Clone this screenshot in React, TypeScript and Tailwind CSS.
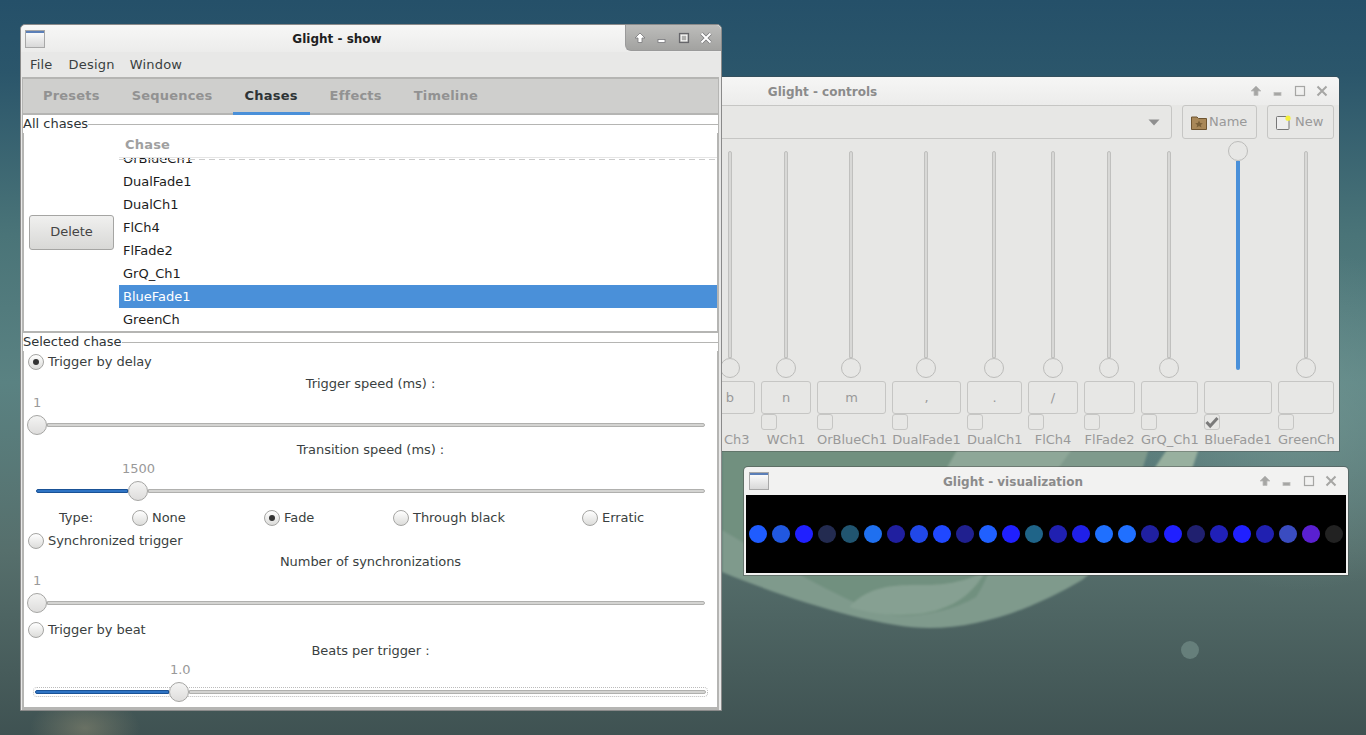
import React from "react";

const CHASES = ["OrBlueCh1", "DualFade1", "DualCh1", "FlCh4", "FlFade2", "GrQ_Ch1", "BlueFade1", "GreenCh"];

const FADERS = [
  { w: "w-[50px]", key: "b", label: "Ch3", labelClass: "pl-[19px] text-left" },
  { w: "w-[50px]", key: "n", label: "WCh1" },
  { w: "w-[69px]", key: "m", label: "OrBlueCh1", odd: true },
  { w: "w-[69px]", key: ",", label: "DualFade1", odd: true },
  { w: "w-[55px]", key: ".", label: "DualCh1", odd: true },
  { w: "w-[50px]", key: "/", label: "FlCh4" },
  { w: "w-[51px]", key: "", label: "FlFade2", odd: true },
  { w: "w-[57px]", key: "", label: "GrQ_Ch1", odd: true },
  { w: "w-[68px]", key: "", label: "BlueFade1", on: true },
  { w: "w-[56px]", key: "", label: "GreenCh" },
];

const LEDS = [
  "#1f5cff", "#2158e0", "#2020ff", "#232b50", "#215570", "#1f70f0", "#201f9f", "#2148e8", "#2048ff",
  "#20208f", "#2060ff", "#2020ff", "#1f6488", "#2020b0", "#2020e8", "#1f70ff", "#2070ff", "#2020a0",
  "#2020ff", "#20206f", "#2020b8", "#2020ff", "#2020b0", "#3a4cc0", "#5a20d0", "#222222",
];

const Wallpaper = () => (
  <svg className="absolute inset-0" width="1366" height="735" viewBox="0 0 1366 735">
    <defs>
      <linearGradient id="sky" x1="0" y1="0" x2="0" y2="1">
        <stop offset="0" stopColor="#255069" />
        <stop offset="0.1" stopColor="#2b566b" />
        <stop offset="0.32" stopColor="#4a7478" />
        <stop offset="0.52" stopColor="#5a8282" />
        <stop offset="0.75" stopColor="#566f6c" />
        <stop offset="1" stopColor="#3f5252" />
      </linearGradient>
      <radialGradient id="glow" cx="0.5" cy="0.5" r="0.5">
        <stop offset="0" stopColor="#85856f" stopOpacity="0.6" />
        <stop offset="1" stopColor="#85856f" stopOpacity="0" />
      </radialGradient>
      <radialGradient id="side" cx="0.5" cy="0.5" r="0.5">
        <stop offset="0" stopColor="#7da09b" stopOpacity="0.55" />
        <stop offset="1" stopColor="#7da09b" stopOpacity="0" />
      </radialGradient>
      <filter id="soft">
        <feGaussianBlur stdDeviation="0.8" />
      </filter>
    </defs>
    <rect width="1366" height="735" fill="url(#sky)" />
    <ellipse cx="1300" cy="420" rx="190" ry="170" fill="url(#side)" />
    <ellipse cx="85" cy="728" rx="55" ry="32" fill="url(#glow)" />
    <g filter="url(#soft)">
      <path d="M722 445 H1150 C1130 510 1110 560 1082 580 C1040 605 985 628 929 628 C880 628 790 600 722 572 Z" fill="#7f9a8c" />
      <path d="M722 445 H1000 C1010 500 1000 560 976 597 C950 612 915 618 891 615 C860 610 790 570 722 530 Z" fill="#71907f" />
      <path d="M849 607 C870 585 895 585 921 585 C945 585 960 583 985 572 C975 590 960 603 938 610 C915 617 880 617 849 607 Z" fill="#86a092" />
      <path d="M960 445 H1075 L1050 480 H940 Z" fill="#8ea798" />
      <path d="M1170 445 H1200 L1190 475 H1150 Z" fill="#98b09f" />
    </g>
    <circle cx="1190" cy="650" r="9" fill="#667f7b" />
  </svg>
);

const ArrowUp = ({ fill, stroke }: { fill: string; stroke: string }) => (
  <svg width="12" height="12" viewBox="0 0 12 12">
    <path d="M6 1 L11 6 H8 V10.5 H4 V6 H1 Z" fill={fill} stroke={stroke} strokeWidth="0.8" />
  </svg>
);

const TitleButtons = ({ active }: { active?: boolean }) => {
  const fill = active ? "#ffffff" : "#a6a6a4";
  const stroke = active ? "#77777a" : "#bdbdbb";
  return (
    <div className="flex items-center">
      <div className="flex w-[22px] justify-center">
        <ArrowUp fill={fill} stroke={stroke} />
      </div>
      <div className="flex w-[22px] justify-center">
        <svg width="12" height="12" viewBox="0 0 12 12">
          <rect x="2" y="7.5" width="7" height="3" fill={fill} stroke={stroke} strokeWidth="0.8" />
        </svg>
      </div>
      <div className="flex w-[22px] justify-center">
        <svg width="12" height="12" viewBox="0 0 12 12">
          <rect x="1.5" y="1.5" width="9" height="9" fill="none" stroke={active ? "#66666a" : "#a6a6a4"} strokeWidth="1.2" />
          {active && <rect x="3.2" y="3.2" width="5.6" height="5.6" fill="none" stroke="#ffffff" strokeWidth="1" />}
        </svg>
      </div>
      <div className="flex w-[22px] justify-center">
        <svg width="12" height="12" viewBox="0 0 12 12">
          {active && <path d="M1.5 1.5 L10.5 10.5 M10.5 1.5 L1.5 10.5" stroke="#77777a" strokeWidth="3.4" />}
          <path d="M1.5 1.5 L10.5 10.5 M10.5 1.5 L1.5 10.5" stroke={fill} strokeWidth="2" />
        </svg>
      </div>
    </div>
  );
};

const WindowIcon = ({ ml }: { ml: string }) => (
  <div className={`${ml} flex h-[18px] w-[20px] shrink-0 flex-col border border-[#a8a8a8] bg-gradient-to-b from-white to-[#d8d8d8]`}>
    <div className="h-[2px] bg-[#5b7fb8]" />
  </div>
);

const Radio = ({ checked }: { checked?: boolean }) => (
  <span className="flex h-[16px] w-[16px] shrink-0 items-center justify-center rounded-full border border-[#a5a5a3] bg-gradient-to-b from-white to-[#dcdcda]">
    {checked && <span className="h-[6px] w-[6px] rounded-full bg-[#333]" />}
  </span>
);

const Thumb = () => (
  <span className="h-[20px] w-[20px] shrink-0 rounded-full border border-[#a5a5a3] bg-gradient-to-b from-[#f4f4f3] to-[#dedddc]" />
);

// horizontal scale: blue part up to the thumb, grey part after it
const Slider = ({ fill }: { fill: string }) => (
  <div className="flex h-[20px] items-center">
    {fill && <div className={`${fill} h-[4px] rounded-l-full border border-[#1a5296] bg-[#2f74c4]`} />}
    <Thumb />
    <div className="h-[4px] flex-1 rounded-r-full border border-[#b0b0ae] bg-[#d4d4d2]" />
  </div>
);

const Row = ({ h, className, children }: { h: string; className?: string; children: React.ReactNode }) => (
  <div className={`flex items-center ${h} ${className ?? ""}`}>{children}</div>
);

type FaderProps = { w: string; keyName: string; label: string; on?: boolean; odd?: boolean; labelClass?: string };

const Fader = ({ w, keyName, label, on, odd, labelClass }: FaderProps) => (
  <div className={`flex ${w} shrink-0 flex-col`}>
    <div className={`flex h-[239px] flex-col items-center ${on ? "pb-[8px] pt-[2px]" : "pt-[12px]"} ${odd ? "pr-[1px]" : ""}`}>
      {on ? (
        <>
          <span className="h-[20px] w-[20px] shrink-0 rounded-full border border-[#bcbcba]" />
          <div className="w-[4px] flex-1 rounded-b-full bg-[#4a90d9]" />
        </>
      ) : (
        <>
          <div className="w-[4px] flex-1 rounded-t-full border border-[#c0c0be] bg-[#d8d8d6]" />
          <span className="h-[20px] w-[20px] shrink-0 rounded-full border border-[#bcbcba]" />
        </>
      )}
    </div>
    <div className="mt-[3px] flex h-[33px] items-center justify-center rounded-[3px] border border-[#c6c6c4] text-[13px] text-[#999]">
      {keyName}
    </div>
    <div className="flex h-[17px] items-start">
      <span className="flex h-[16px] w-[16px] items-center justify-center rounded-[3px] border border-[#c6c6c4]">
        {on && (
          <svg width="14" height="13" viewBox="0 0 14 13">
            <path d="M1.5 6 L5.2 10 L12.5 2" fill="none" stroke="#7a7a7a" strokeWidth="3" />
          </svg>
        )}
      </span>
    </div>
    <div className={`mt-[1px] whitespace-nowrap text-center text-[13px] leading-[16px] text-[#999] ${labelClass ?? ""}`}>{label}</div>
  </div>
);

const App = () => {
  return (
    <div className="relative h-[735px] w-[1366px] overflow-hidden font-['DejaVu_Sans',sans-serif] text-[13px] text-[#2e3436]">
      <Wallpaper />

      {/* controls window, partly behind the main one */}
      <div className="absolute left-[375px] top-[77px] flex h-[374px] w-[964px] flex-col rounded-t-[4px] bg-[#e7e7e5] shadow-[0_0_0_1px_rgba(70,70,70,0.35)]">
        <div className="flex h-[28px] shrink-0 items-center rounded-t-[4px] bg-gradient-to-b from-[#f6f6f5] to-[#ececeb]">
          <div className="w-[25px]" />
          <div className="flex-1 pt-[1px] text-center text-[12px] font-bold text-[#8b8b8b]">Glight - controls</div>
          <div className="pr-[6px]">
            <TitleButtons />
          </div>
        </div>
        <div className="flex h-[34px] shrink-0 items-stretch gap-[10px] pr-[5px]">
          <div className="flex flex-1 items-center justify-end rounded-[3px] border border-[#c6c6c4] pr-[11px]">
            <svg width="12" height="7" viewBox="0 0 12 7">
              <path d="M0.5 0.5 H11.5 L6 6.5 Z" fill="#8f8f8f" />
            </svg>
          </div>
          <div className="flex w-[75px] items-center gap-[2px] rounded-[3px] border border-[#c6c6c4] pl-[8px] text-[#999]">
            <svg width="16" height="15" viewBox="0 0 16 15">
              <path d="M0.5 2 H6 L7.5 3.5 H15.5 V14.5 H0.5 Z" fill="#a98858" stroke="#6f5530" />
              <path d="M8 5.5 L9.2 8 L11.8 8.2 L9.8 9.9 L10.5 12.4 L8 11 L5.5 12.4 L6.2 9.9 L4.2 8.2 L6.8 8 Z" fill="#7a6038" />
            </svg>
            <span>Name</span>
          </div>
          <div className="flex w-[67px] items-center gap-[4px] rounded-[3px] border border-[#c6c6c4] pl-[8px] text-[#999]">
            <svg width="15" height="15" viewBox="0 0 15 15">
              <rect x="0.5" y="1.5" width="12.5" height="13" rx="1" fill="#eeeeee" stroke="#777777" />
              <circle cx="12" cy="3.2" r="2.6" fill="#f5f03c" />
            </svg>
            <span>New</span>
          </div>
        </div>
        <div className="flex justify-end gap-[6px] pr-[5px]">
          {FADERS.map((f) => (
            <Fader key={f.label} w={f.w} keyName={f.key} label={f.label} on={f.on} odd={f.odd} labelClass={f.labelClass} />
          ))}
        </div>
      </div>

      {/* visualization window */}
      <div className="absolute left-[744px] top-[467px] flex h-[108px] w-[604px] flex-col rounded-t-[4px] bg-[#f2f2f1] shadow-[0_0_0_1px_rgba(70,70,70,0.45)]">
        <div className="flex h-[28px] shrink-0 items-center">
          <WindowIcon ml="ml-[5px]" />
          <div className="w-[3px]" />
          <div className="flex-1 pt-[1px] text-center text-[12px] font-bold text-[#8b8b8b]">Glight - visualization</div>
          <div className="pr-[6px]">
            <TitleButtons />
          </div>
        </div>
        <div className="mx-[2px] mb-[2px] flex flex-1 items-center justify-between bg-black px-[2.5px]">
          {LEDS.map((c, i) => (
            <span key={i} className="h-[18px] w-[18px] rounded-full" style={{ backgroundColor: c }} />
          ))}
        </div>
      </div>

      {/* main window */}
      <div className="absolute left-[20px] top-[24px] flex h-[687px] w-[702px] flex-col rounded-t-[5px] border border-[#8a8a8a] bg-[#e8e8e7]">
        <div className="relative flex h-[27px] shrink-0 items-center rounded-t-[5px] bg-gradient-to-b from-[#f7f7f6] to-[#ececeb]">
          <WindowIcon ml="ml-[4px]" />
          <div className="w-[4px]" />
          <div className="flex-1 pt-[1px] text-center text-[12px] font-bold text-[#1f1f1f]">Glight - show</div>
          <div className="flex h-[26px] self-start rounded-bl-[6px] rounded-tr-[5px] border-b border-l border-[#9a9a9a] bg-gradient-to-b from-[#bdbdbb] to-[#a2a2a0] pl-[3px] pr-[4px]">
            <TitleButtons active />
          </div>
        </div>
        <div className="flex h-[25px] shrink-0 items-center gap-[16px] px-[9px] tracking-[0.2px] text-[#3a3f41]">
          <span>File</span>
          <span>Design</span>
          <span className="-ml-px">Window</span>
        </div>
        <div className="ml-[1px] mr-[2px] flex flex-1 flex-col border-x border-b border-t-2 border-[#b5b5b3] bg-white">
          <div className="flex h-[36px] shrink-0 items-stretch gap-[8px] border-b-2 border-[#b5b5b3] bg-[#cfcfcd] px-[8px] text-[13px] font-bold tracking-[0.2px] text-[#929292]">
            <div className="flex items-center px-[12px]">Presets</div>
            <div className="flex items-center px-[12px]">Sequences</div>
            <div className="-mb-[2px] flex items-center border-b-[3px] border-[#4a90d9] px-[12px] text-[#2e3436]">Chases</div>
            <div className="flex items-center px-[12px]">Effects</div>
            <div className="flex items-center px-[12px]">Timeline</div>
          </div>

          {/* all chases */}
          <div className="flex h-[18px] shrink-0 items-center">
            <span>All chases</span>
            <div className="h-px flex-1 bg-[#b5b5b3]" />
          </div>
          <div className="flex h-[200px] shrink-0 border-x border-b-2 border-[#b5b5b3]">
            <div className="flex w-[95px] shrink-0 items-center pl-[5px]">
              <button className="h-[35px] w-[85px] rounded-[3px] border border-[#a5a5a3] bg-gradient-to-b from-[#f0f0ef] to-[#d8d8d6] text-[#444]">
                Delete
              </button>
            </div>
            <div className="flex min-w-0 flex-1 flex-col">
              <div className="flex h-[25px] shrink-0 items-center border-b border-[#e5e5e5] pl-[6px] font-bold tracking-[0.2px] text-[#a0a0a0]">
                Chase
              </div>
              <div className="relative flex-1 overflow-hidden">
                <div className="absolute left-0 right-0 top-[1px] h-px bg-[repeating-linear-gradient(90deg,#cccccc_0_6px,transparent_6px_10px)]" />
                <div className="-mt-[11px]">
                  {CHASES.map((c) => (
                    <div
                      key={c}
                      className={`flex h-[23px] items-center pl-[4px] ${c === "BlueFade1" ? "bg-[#4a90d9] text-white" : "text-[#1c1c1c]"}`}
                    >
                      {c}
                    </div>
                  ))}
                </div>
              </div>
            </div>
          </div>

          {/* selected chase */}
          <div className="flex h-[18px] shrink-0 items-center">
            <span>Selected chase</span>
            <div className="h-px flex-1 bg-[#b5b5b3]" />
          </div>
          <div className="flex flex-1 flex-col border-x border-b-2 border-[#b5b5b3] tracking-[-0.05px] text-[#3a3f41]">
            <Row h="h-[23px]" className="gap-[4px] pb-[1px] pl-[4px]">
              <Radio checked />
              <span>Trigger by delay</span>
            </Row>
            <Row h="h-[20px]" className="justify-center">Trigger speed (ms) :</Row>
            <Row h="h-[18px]" className="pl-[9px] text-[#999]">1</Row>
            <div className="flex h-[28px] items-center pb-[2px] pl-[3px] pr-[12px]">
              <div className="flex-1">
                <Slider fill="" />
              </div>
            </div>
            <Row h="h-[20px]" className="justify-center">Transition speed (ms) :</Row>
            <Row h="h-[18px]" className="pl-[98px] text-[#999]">1500</Row>
            <div className="flex h-[28px] items-center pb-[2px] pl-[12px] pr-[12px]">
              <div className="flex-1">
                <Slider fill="w-[92px]" />
              </div>
            </div>
            <Row h="h-[24px]" className="pl-[35px]">
              <span className="w-[73px]">Type:</span>
              <span className="flex w-[132px] items-center gap-[4px]"><Radio />None</span>
              <span className="flex w-[129px] items-center gap-[4px]"><Radio checked />Fade</span>
              <span className="flex w-[189px] items-center gap-[4px]"><Radio />Through black</span>
              <span className="flex items-center gap-[4px]"><Radio />Erratic</span>
            </Row>
            <Row h="h-[22px]" className="gap-[4px] pl-[4px]">
              <Radio />
              <span>Synchronized trigger</span>
            </Row>
            <Row h="h-[20px]" className="justify-center">Number of synchronizations</Row>
            <Row h="h-[18px]" className="pl-[9px] text-[#999]">1</Row>
            <div className="flex h-[28px] items-center pb-[2px] pl-[3px] pr-[12px]">
              <div className="flex-1">
                <Slider fill="" />
              </div>
            </div>
            <Row h="h-[24px]" className="gap-[4px] pl-[4px]">
              <Radio />
              <span>Trigger by beat</span>
            </Row>
            <Row h="h-[18px]" className="justify-center">Beats per trigger :</Row>
            <Row h="h-[20px]" className="pl-[146px] text-[#999]">1.0</Row>
            <div className="flex h-[26px] items-center pb-[2px] pl-[9px] pr-[9px]">
              <div className="flex h-[10px] flex-1 items-center rounded-[4px] border border-dotted border-[#bbbbbb] px-[1px]">
                <div className="flex-1">
                  <Slider fill="w-[134px]" />
                </div>
              </div>
            </div>
          </div>
        </div>
      </div>
    </div>
  );
};

export default App;
